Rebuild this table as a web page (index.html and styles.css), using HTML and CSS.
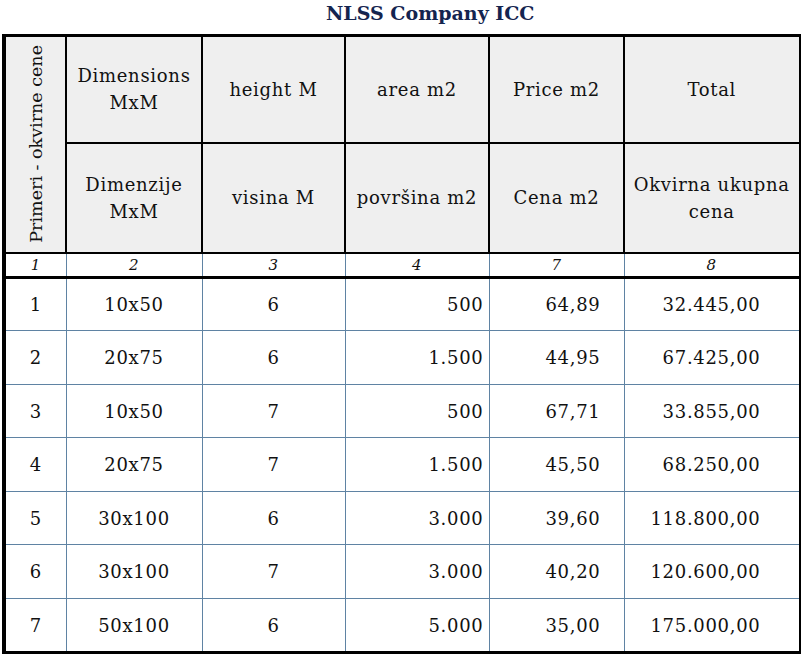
FILE: index.html
```html
<!DOCTYPE html>
<html lang="sr">
<head>
<meta charset="utf-8">
<title>NLSS Company ICC</title>
<link rel="stylesheet" href="styles.css">
</head>
<body>
<h1 class="title">NLSS Company ICC</h1>
<table class="grid">
  <colgroup>
    <col class="c1"><col class="c2"><col class="c3"><col class="c4"><col class="c5"><col class="c6">
  </colgroup>
  <thead>
    <tr class="h1">
      <th rowspan="2" class="side"><div class="vert">Primeri - okvirne cene</div></th>
      <th>Dimensions<br>MxM</th>
      <th>height M</th>
      <th>area m2</th>
      <th>Price m2</th>
      <th>Total</th>
    </tr>
    <tr class="h2">
      <th>Dimenzije<br>MxM</th>
      <th>visina M</th>
      <th>površina m2</th>
      <th>Cena m2</th>
      <th>Okvirna ukupna<br>cena</th>
    </tr>
    <tr class="idx">
      <td>1</td><td>2</td><td>3</td><td>4</td><td>7</td><td>8</td>
    </tr>
  </thead>
  <tbody>
    <tr class="r53"><td class="ctr">1</td><td class="ctr">10x50</td><td class="ctr">6</td><td class="a">500</td><td class="p">64,89</td><td class="t">32.445,00</td></tr>
    <tr class="r54"><td class="ctr">2</td><td class="ctr">20x75</td><td class="ctr">6</td><td class="a">1.500</td><td class="p">44,95</td><td class="t">67.425,00</td></tr>
    <tr class="r53"><td class="ctr">3</td><td class="ctr">10x50</td><td class="ctr">7</td><td class="a">500</td><td class="p">67,71</td><td class="t">33.855,00</td></tr>
    <tr class="r54"><td class="ctr">4</td><td class="ctr">20x75</td><td class="ctr">7</td><td class="a">1.500</td><td class="p">45,50</td><td class="t">68.250,00</td></tr>
    <tr class="r53"><td class="ctr">5</td><td class="ctr">30x100</td><td class="ctr">6</td><td class="a">3.000</td><td class="p">39,60</td><td class="t">118.800,00</td></tr>
    <tr class="r54"><td class="ctr">6</td><td class="ctr">30x100</td><td class="ctr">7</td><td class="a">3.000</td><td class="p">40,20</td><td class="t">120.600,00</td></tr>
    <tr class="r54"><td class="ctr">7</td><td class="ctr">50x100</td><td class="ctr">6</td><td class="a">5.000</td><td class="p">35,00</td><td class="t">175.000,00</td></tr>
  </tbody>
</table>
</body>
</html>
```

FILE: styles.css
```css
html, body {
  margin: 0;
  padding: 0;
  background: #ffffff;
}
body {
  font-family: "DejaVu Serif", "Liberation Serif", serif;
  color: #111111;
}
.title {
  margin: 0;
  height: 34px;
  padding-left: 326px;
  font-size: 19px;
  line-height: 26px;
  font-weight: bold;
  color: #14244f;
  box-sizing: border-box;
}
.grid {
  margin-left: 2px;
  width: 796px;
  table-layout: fixed;
  border-collapse: collapse;
  border: 3px solid #000;
  border-left-width: 4px;
  font-size: 18px;
  letter-spacing: 0.7px;
}
.c1 { width: 62px; }
.c2 { width: 136px; }
.c3 { width: 143px; }
.c4 { width: 144px; }
.c5 { width: 135px; }
.c6 { width: 176px; }
.grid th {
  background: #efefef;
  border: 2px solid #000;
  font-weight: normal;
  text-align: center;
  vertical-align: middle;
  line-height: 27px;
  padding: 0;
}
.h1 { height: 107px; }
.h2 { height: 110px; }
.side {
  padding: 0;
}
.vert {
  writing-mode: vertical-rl;
  transform: rotate(180deg);
  margin: 0 auto;
  font-size: 17.5px;
  line-height: 22px;
  letter-spacing: 0;
  white-space: nowrap;
}
.idx {
  height: 25px;
}
.idx td {
  font-style: italic;
  font-size: 15px;
  text-align: center;
  padding: 0;
  line-height: 20px;
  border-left: 1px solid #5f83a3;
  border-bottom: 3px solid #000;
}
.grid tbody td {
  border: 1px solid #5f83a3;
  padding: 0;
  vertical-align: middle;
}
.r53 { height: 53px; }
.r54 { height: 54px; }
.ctr { text-align: center; }
.a { text-align: right; padding-right: 5px !important; }
.p { text-align: right; padding-right: 23px !important; }
.t { text-align: right; padding-right: 38px !important; }
```
